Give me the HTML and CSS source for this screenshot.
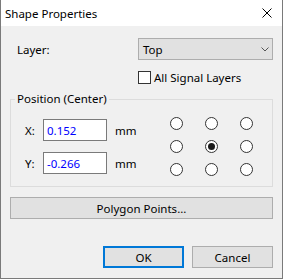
FILE: index.html
```html
<!DOCTYPE html>
<html lang="en">
<head>
  <meta charset="UTF-8">
  <title>Shape Properties</title>
  <link rel="stylesheet" href="styles.css">
</head>
<body>

  <div class="dialog">
    <!-- Title bar -->
    <div class="titlebar">
      <span class="title">Shape Properties</span>
      <svg class="close" width="10" height="10" viewBox="0 0 10 10">
        <path d="M0.5 0.5L9.5 9.5M9.5 0.5L0.5 9.5" stroke="#000" stroke-width="1" fill="none"/>
      </svg>
    </div>

    <div class="dialog-body">
      <div class="layer-row">
        <label class="layer-label">Layer:</label>
        <div class="select">
          <span>Top</span>
          <svg width="8" height="5" viewBox="0 0 8 5">
            <polyline points="0.5,0.5 4,4 7.5,0.5" stroke="#555" stroke-width="1" fill="none"/>
          </svg>
        </div>
      </div>

      <div class="check-row">
        <span class="checkbox"></span>
        <span>All Signal Layers</span>
      </div>

      <!-- Position group -->
      <fieldset class="group">
        <legend>Position (Center)</legend>
        <div class="coords">
          <div class="coord">
            <span class="axis">X:</span>
            <input type="text" value="0.152">
            <span class="unit">mm</span>
          </div>
          <div class="coord">
            <span class="axis">Y:</span>
            <input type="text" value="-0.266">
            <span class="unit">mm</span>
          </div>
        </div>
        <div class="anchors">
          <span class="radio"></span>
          <span class="radio"></span>
          <span class="radio"></span>
          <span class="radio"></span>
          <span class="radio checked"></span>
          <span class="radio"></span>
          <span class="radio"></span>
          <span class="radio"></span>
          <span class="radio"></span>
        </div>
      </fieldset>

      <button class="btn wide">Polygon Points...</button>

      <div class="footer">
        <button class="btn default">OK</button>
        <button class="btn">Cancel</button>
      </div>
    </div>
  </div>

</body>
</html>
```

FILE: styles.css
```css
body {
  margin: 0;
  font-family: "Segoe UI", "Noto Sans", sans-serif;
  font-size: 11.5px;
  color: #000;
}
.dialog {
  width: 283px;
  height: 279px;
  box-sizing: border-box;
  border: 1px solid #7a7a7a;
  border-top: none;
  background: #f0f0f0;
}
.titlebar {
  height: 26px;
  background: #fff;
  display: flex;
  align-items: center;
  justify-content: space-between;
  padding: 0 10px 0 4px;
}
.dialog-body {
  padding: 12px 9px 0 9px;
}
.layer-row {
  display: flex;
  align-items: center;
  justify-content: space-between;
  height: 22px;
}
.layer-label {
  padding-left: 7px;
}
.select {
  width: 135px;
  height: 22px;
  box-sizing: border-box;
  border: 1px solid #adadad;
  background: #e1e1e1;
  display: flex;
  align-items: center;
  justify-content: space-between;
  padding: 0 3px 0 4px;
}
.check-row {
  display: flex;
  align-items: center;
  gap: 3px;
  height: 13px;
  margin: 11px 0 0 128px;
}
.checkbox {
  width: 13px;
  height: 13px;
  box-sizing: border-box;
  border: 1px solid #333;
  background: #fff;
}
.group {
  margin: 8px 0 0 0;
  padding: 11px 0 10px 0;
  border: 1px solid #dcdcdc;
  display: flex;
  align-items: flex-start;
}
.group legend {
  margin-left: 4px;
  padding: 0 2px;
  line-height: 14px;
}
.coords {
  width: 159px;
  box-sizing: border-box;
  padding-left: 14px;
  margin-top: 2px;
  display: flex;
  flex-direction: column;
  gap: 11px;
}
.coord {
  display: flex;
  align-items: center;
}
.axis {
  width: 18px;
}
.coord input {
  width: 64px;
  height: 22px;
  box-sizing: border-box;
  border: 1px solid #7a7a7a;
  padding: 0 3px;
  font: inherit;
  color: #0000ff;
  background: #fff;
  outline: none;
}
.unit {
  margin-left: 8px;
}
.anchors {
  display: grid;
  grid-template-columns: repeat(3, 13px);
  grid-auto-rows: 13px;
  column-gap: 22px;
  row-gap: 10px;
}
.radio {
  width: 13px;
  height: 13px;
  box-sizing: border-box;
  border: 1px solid #333;
  border-radius: 50%;
  background: #fff;
  display: flex;
  align-items: center;
  justify-content: center;
}
.radio.checked::after {
  content: "";
  width: 7px;
  height: 7px;
  border-radius: 50%;
  background: #1a1a1a;
}
.btn {
  height: 22px;
  box-sizing: border-box;
  border: 1px solid #adadad;
  background: #e1e1e1;
  font: inherit;
  color: #000;
  padding: 0;
}
.wide {
  display: block;
  width: 100%;
  margin-top: 10px;
}
.footer {
  display: flex;
  justify-content: flex-end;
  gap: 8px;
  margin-top: 27px;
}
.footer .btn {
  width: 81px;
}
.btn.default {
  border: 2px solid #0078d7;
}
```
